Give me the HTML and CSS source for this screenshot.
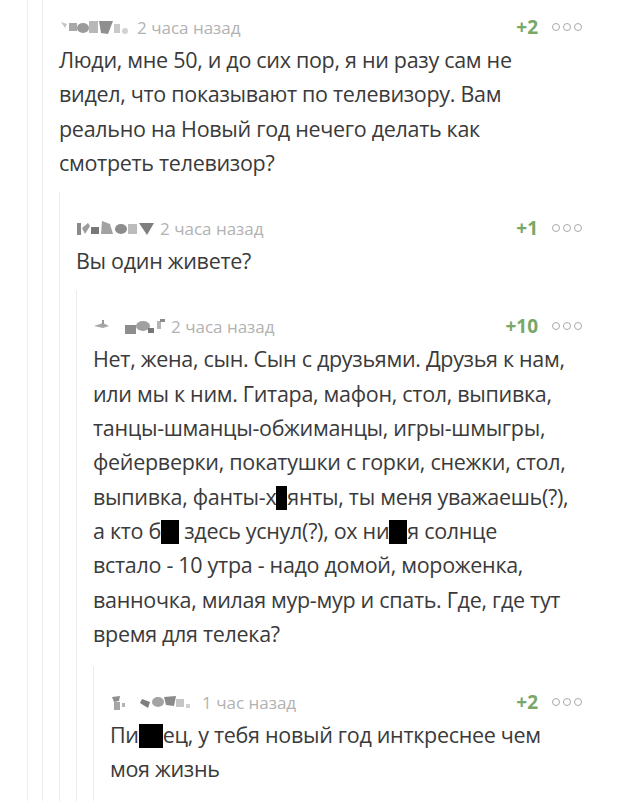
FILE: index.html
```html
<!DOCTYPE html>
<html lang="ru">
<head>
    <meta charset="utf-8">
    <title>Комментарии</title>
    <link rel="stylesheet" href="styles.css">
</head>
<body>
    <div class="thread">
        <div class="comment">
            <div class="meta">
                <span class="user">
                    <svg width="74" height="20" viewBox="0 0 74 20">
                        <path d="M2 5 L8 7 L6 11 Z" fill="#c4c4c4"/>
                        <rect x="10" y="6" width="8" height="8" fill="#a8a8a8"/>
                        <ellipse cx="24" cy="11" rx="6" ry="5" fill="#9a9a9a"/>
                        <rect x="30" y="4" width="9" height="12" fill="#b8b8b8"/>
                        <path d="M40 4 L54 4 L49 17 L42 16 Z" fill="#8f8f8f"/>
                        <rect x="55" y="7" width="6" height="9" fill="#c9c9c9"/>
                        <circle cx="66" cy="14" r="3" fill="#d2d2d2"/>
                    </svg>
                </span>
                <span class="time">2 часа назад</span>
                <span class="score">+2</span>
                <span class="dots"><i></i><i></i><i></i></span>
            </div>
            <p class="text">Люди, мне 50, и до сих пор, я ни разу сам не<br>
                видел, что показывают по телевизору. Вам<br>
                реально на Новый год нечего делать как<br>
                смотреть телевизор?</p>

            <div class="comment">
                <div class="meta">
                    <span class="user">
                        <svg width="80" height="20" viewBox="0 0 80 20">
                            <rect x="1" y="5" width="4" height="12" fill="#8a8a8a"/>
                            <path d="M6 10 L12 5 L14 8 L9 16 Z" fill="#9c9c9c"/>
                            <rect x="15" y="9" width="8" height="7" fill="#777"/>
                            <path d="M26 3 L34 6 L37 16 L25 16 Z" fill="#a2a2a2"/>
                            <ellipse cx="45" cy="11" rx="6" ry="5" fill="#8c8c8c"/>
                            <rect x="52" y="6" width="9" height="10" fill="#bcbcbc"/>
                            <path d="M63 5 L78 5 L71 17 Z" fill="#7e7e7e"/>
                        </svg>
                    </span>
                    <span class="time">2 часа назад</span>
                    <span class="score">+1</span>
                    <span class="dots"><i></i><i></i><i></i></span>
                </div>
                <p class="text">Вы один живете?</p>

                <div class="comment">
                    <div class="meta">
                        <span class="user">
                            <svg width="74" height="20" viewBox="0 0 74 20">
                                <path d="M1 10 L10 7 L16 10 L10 12 Z" fill="#a6a6a6"/>
                                <rect x="9" y="4" width="2" height="4" fill="#999"/>
                                <rect x="32" y="9" width="11" height="9" fill="#8d8d8d"/>
                                <ellipse cx="50" cy="10" rx="7" ry="5" fill="#a0a0a0"/>
                                <rect x="55" y="12" width="6" height="5" fill="#777"/>
                                <rect x="64" y="5" width="4" height="8" fill="#b4b4b4"/>
                                <rect x="67" y="3" width="5" height="3" fill="#8a8a8a"/>
                            </svg>
                        </span>
                        <span class="time">2 часа назад</span>
                        <span class="score">+10</span>
                        <span class="dots"><i></i><i></i><i></i></span>
                    </div>
                    <p class="text">Нет, жена, сын. Сын с друзьями. Друзья к нам,<br>
                        или мы к ним. Гитара, мафон, стол, выпивка,<br>
                        танцы-шманцы-обжиманцы, игры-шмыгры,<br>
                        фейерверки, покатушки с горки, снежки, стол,<br>
                        выпивка, фанты-х<span class="censor narrow"></span>янты, ты меня уважаешь(?),<br>
                        а кто б<span class="censor"></span> здесь уснул(?), ох ни<span class="censor"></span>я солнце<br>
                        встало - 10 утра - надо домой, мороженка,<br>
                        ванночка, милая мур-мур и спать. Где, где тут<br>
                        время для телека?</p>

                    <div class="comment tail">
                        <div class="meta">
                            <span class="user">
                                <svg width="88" height="20" viewBox="0 0 88 20">
                                    <path d="M2 5 L10 4 L9 9 L4 10 Z" fill="#8f8f8f"/>
                                    <rect x="4" y="10" width="6" height="8" fill="#a6a6a6"/>
                                    <rect x="12" y="11" width="3" height="4" fill="#b3b3b3"/>
                                    <path d="M32 7 L40 10 L38 16 L30 11 Z" fill="#7f7f7f"/>
                                    <ellipse cx="48" cy="10" rx="6" ry="5" fill="#a3a3a3"/>
                                    <path d="M54 5 L66 4 L64 14 L56 13 Z" fill="#8a8a8a"/>
                                    <rect x="66" y="7" width="8" height="8" fill="#c6c6c6"/>
                                    <rect x="76" y="12" width="4" height="4" fill="#d0d0d0"/>
                                </svg>
                            </span>
                            <span class="time">1 час назад</span>
                            <span class="score">+2</span>
                            <span class="dots"><i></i><i></i><i></i></span>
                        </div>
                        <p class="text">Пи<span class="censor wide"></span>ец, у тебя новый год инткреснее чем<br>
                            моя жизнь</p>
                    </div>
                </div>
            </div>
        </div>
    </div>
</body>
</html>
```

FILE: styles.css
```css
html, body {
    height: 100%;
    overflow: hidden;
}
body {
    margin: 0;
    background-color: white;
    font-family: "Open Sans", "Noto Sans", sans-serif;
    color: #3a3a3a;
    padding: 0 35px 0 27px;
}
.thread {
    border-left: 1px solid #efefef;
    padding-left: 14px;
}
.comment {
    border-left: 1px solid #ececec;
    padding-left: 16px;
    padding-top: 15px;
}
.comment .comment {
    margin-top: 12px;
    padding-top: 24px;
}
.comment.tail {
    margin-top: 15px;
    padding-bottom: 14px;
}
.meta {
    display: flex;
    align-items: center;
    height: 24px;
}
.user {
    display: flex;
    align-items: center;
    margin-right: 4px;
}
.time {
    font-size: 17px;
    color: #b2b2b2;
    flex: 1;
}
.score {
    font-size: 19px;
    font-weight: bold;
    color: #78a867;
    margin-right: 14px;
}
.dots {
    display: flex;
    gap: 3px;
    margin-right: 3px;
}
.dots i {
    width: 6px;
    height: 6px;
    border: 1px solid #a9a9a9;
    border-radius: 50%;
}
.text {
    margin: 4px 0 0 0;
    font-size: 21.5px;
    line-height: 34.3px;
    letter-spacing: -0.3px;
    white-space: nowrap;
}
.censor {
    display: inline-block;
    width: 18px;
    height: 24px;
    background-color: black;
    vertical-align: -5px;
}
.censor.narrow {
    width: 11px;
}
.censor.wide {
    width: 24px;
}
```
